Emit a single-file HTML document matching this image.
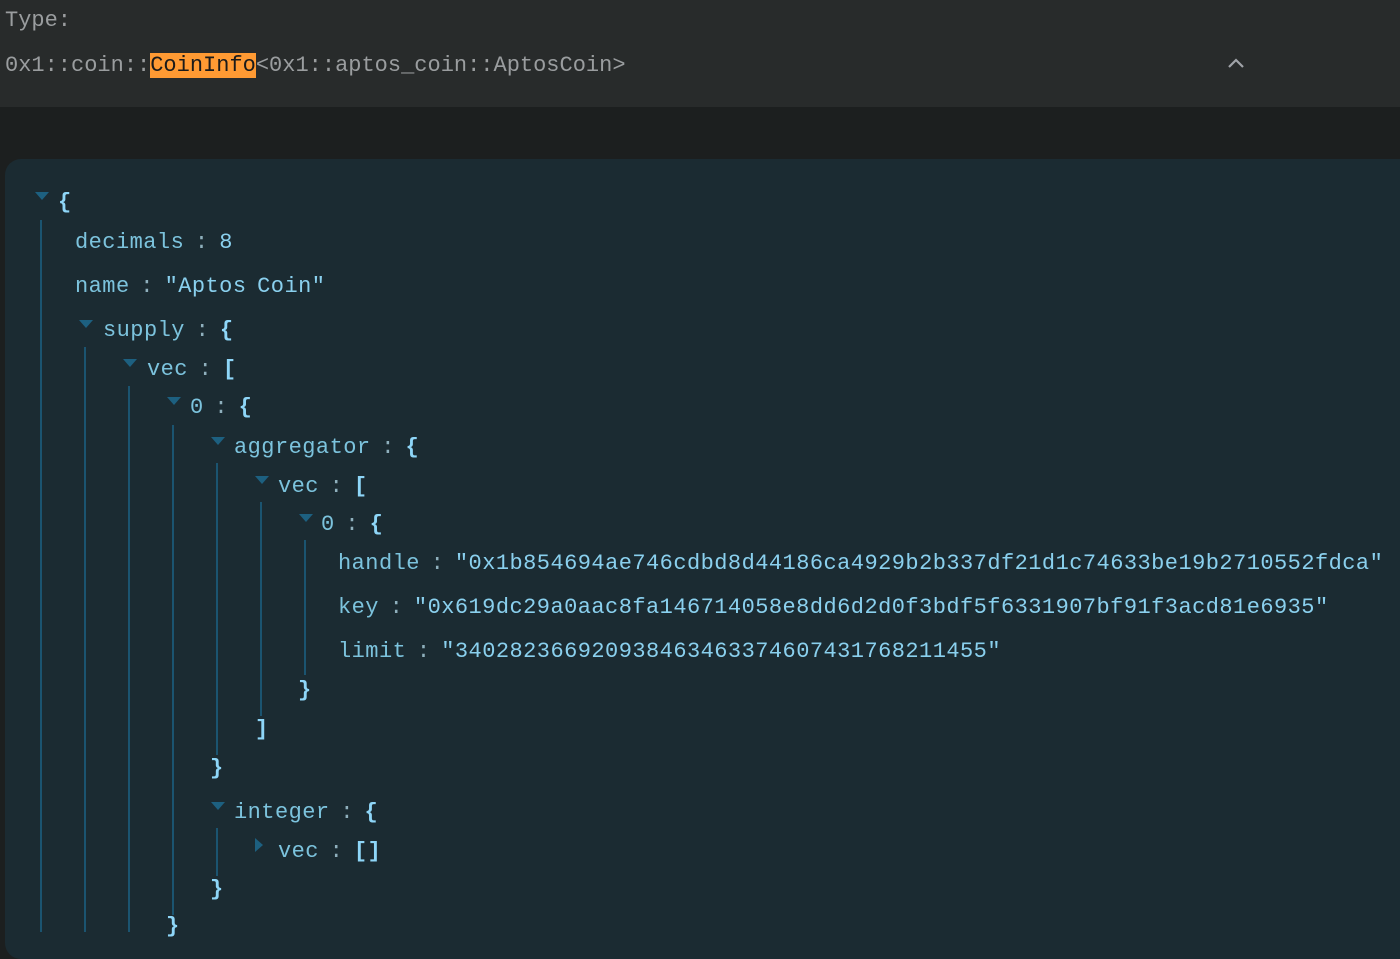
<!DOCTYPE html>
<html><head><meta charset="utf-8"><style>
body{margin:0;width:1400px;height:932px;overflow:hidden;background:#1c1f1f;font-family:"Liberation Mono",monospace;font-size:22px;position:relative}
.hdr{position:absolute;left:0;top:0;width:1400px;height:107px;background:#282b2b;color:#9a9d9f}
.t{position:absolute;white-space:pre;line-height:28px;top:2px}
.panel{position:absolute;left:5px;top:159px;width:1420px;height:800px;background:#1b2b32;border-radius:16px}
.r{position:absolute;white-space:pre;line-height:30px;color:#7cc3dd;letter-spacing:0.45px;word-spacing:-3px;margin-top:2px}
.c{color:#8fb0bd}
.b{color:#8ed6f8;font-weight:bold}
.v{color:#8ad0ee}
.tri{position:absolute;width:0;height:0;border-left:7px solid transparent;border-right:7px solid transparent;border-top:8px solid #1d6080}
.trr{position:absolute;width:0;height:0;border-top:7px solid transparent;border-bottom:7px solid transparent;border-left:8px solid #1d6080}
.ln{position:absolute;width:2px;background:#1b5470}
</style></head><body>
<div class="hdr">
<div class="t" style="left:5px;top:7px">Type:</div>
<div class="t" style="left:5px;top:52px">0x1::coin::<span style="background:#ff9a33;color:#1a1a1a">CoinInfo</span>&lt;0x1::aptos_coin::AptosCoin&gt;</div>
<svg style="position:absolute;left:1227px;top:57px" width="18" height="12"><path d="M2 10 L9 3 L16 10" stroke="#a0a3a8" stroke-width="2.2" fill="none"/></svg>
</div>
<div class="panel"></div>

<div class="ln" style="left:40px;top:220px;height:712px"></div>
<div class="ln" style="left:84px;top:347px;height:585px"></div>
<div class="ln" style="left:128px;top:386px;height:546px"></div>
<div class="ln" style="left:172px;top:425px;height:490px"></div>
<div class="ln" style="left:216px;top:463px;height:292px"></div>
<div class="ln" style="left:216px;top:828px;height:48px"></div>
<div class="ln" style="left:260px;top:502px;height:214px"></div>
<div class="ln" style="left:304px;top:540px;height:135px"></div>

<div class="tri" style="left:35px;top:192px"></div><div class="r" style="left:58px;top:186px"><span class="b">{</span></div>
<div class="r" style="left:75px;top:226px">decimals <span class="c">:</span> <span class="v">8</span></div>
<div class="r" style="left:75px;top:270px">name <span class="c">:</span> <span class="v">"Aptos Coin"</span></div>
<div class="tri" style="left:79px;top:320px"></div><div class="r" style="left:103px;top:314px">supply <span class="c">:</span> <span class="b">{</span></div>
<div class="tri" style="left:123px;top:359px"></div><div class="r" style="left:147px;top:353px">vec <span class="c">:</span> <span class="b">[</span></div>
<div class="tri" style="left:167px;top:397px"></div><div class="r" style="left:190px;top:391px">0 <span class="c">:</span> <span class="b">{</span></div>
<div class="tri" style="left:211px;top:437px"></div><div class="r" style="left:234px;top:431px">aggregator <span class="c">:</span> <span class="b">{</span></div>
<div class="tri" style="left:255px;top:476px"></div><div class="r" style="left:278px;top:470px">vec <span class="c">:</span> <span class="b">[</span></div>
<div class="tri" style="left:299px;top:514px"></div><div class="r" style="left:321px;top:508px">0 <span class="c">:</span> <span class="b">{</span></div>
<div class="r" style="left:338px;top:547px">handle <span class="c">:</span> <span class="v">"0x1b854694ae746cdbd8d44186ca4929b2b337df21d1c74633be19b2710552fdca"</span></div>
<div class="r" style="left:338px;top:591px">key <span class="c">:</span> <span class="v">"0x619dc29a0aac8fa146714058e8dd6d2d0f3bdf5f6331907bf91f3acd81e6935"</span></div>
<div class="r" style="left:338px;top:635px">limit <span class="c">:</span> <span class="v">"340282366920938463463374607431768211455"</span></div>
<div class="r" style="left:298px;top:674px"><span class="b">}</span></div>
<div class="r" style="left:255px;top:713px"><span class="b">]</span></div>
<div class="r" style="left:210px;top:752px"><span class="b">}</span></div>
<div class="tri" style="left:211px;top:802px"></div><div class="r" style="left:234px;top:796px">integer <span class="c">:</span> <span class="b">{</span></div>
<div class="trr" style="left:255px;top:838px"></div><div class="r" style="left:278px;top:835px">vec <span class="c">:</span> <span class="b">[]</span></div>
<div class="r" style="left:210px;top:873px"><span class="b">}</span></div>
<div class="r" style="left:166px;top:910px"><span class="b">}</span></div>
</body></html>
